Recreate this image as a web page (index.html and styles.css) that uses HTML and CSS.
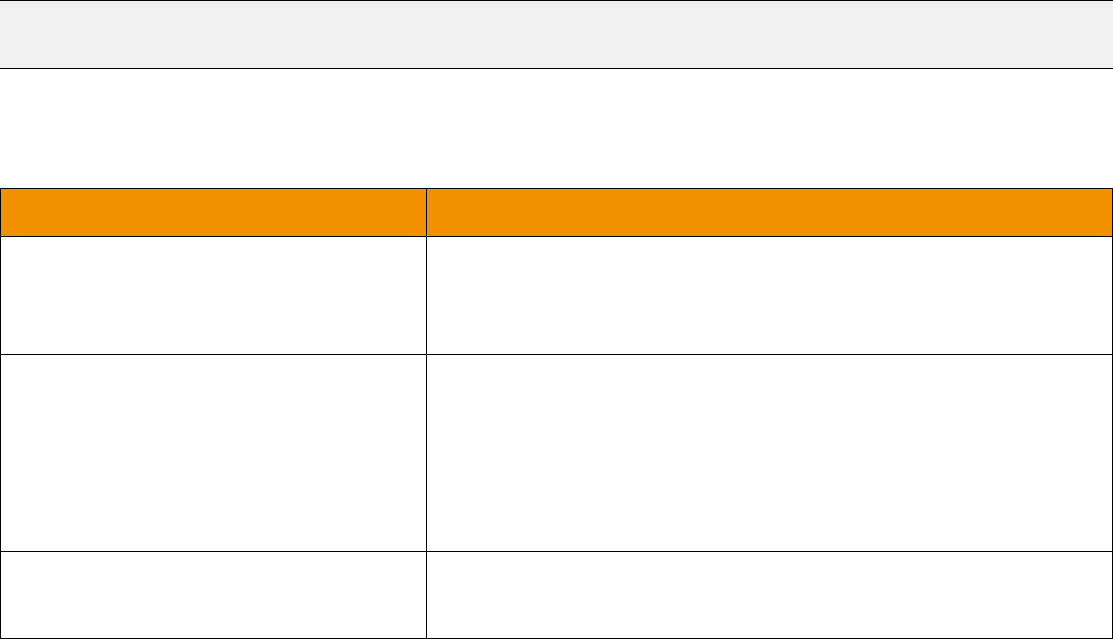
FILE: index.html
```html
<!DOCTYPE html>
<html>
<head>
<meta charset="utf-8">
<link rel="stylesheet" href="styles.css">
</head>
<body>
<div class="topbar"></div>
<div class="table">
  <div class="cell head"></div>
  <div class="cell head"></div>
  <div class="cell r1"></div>
  <div class="cell r1"></div>
  <div class="cell r2"></div>
  <div class="cell r2"></div>
  <div class="cell r3"></div>
  <div class="cell r3"></div>
</div>
</body>
</html>
```
FILE: styles.css
```css
html, body {
  margin: 0;
  padding: 0;
  background: #ffffff;
  font-family: "Liberation Sans", Arial, sans-serif;
  overflow: hidden;
}
.topbar {
  height: 67px;
  background: #f0f0f0;
  border-top: 1px solid #000;
  border-bottom: 1px solid #000;
}
.table {
  margin-top: 119px;
  display: grid;
  grid-template-columns: 426px 1fr;
  grid-template-rows: 48px 118px 197px 87px;
  border-top: 1px solid #000;
  border-left: 1px solid #000;
}
.cell {
  box-sizing: border-box;
  border-right: 1px solid #000;
  border-bottom: 1px solid #000;
  background: #ffffff;
}
.cell.head {
  background: #f29100;
}
```
